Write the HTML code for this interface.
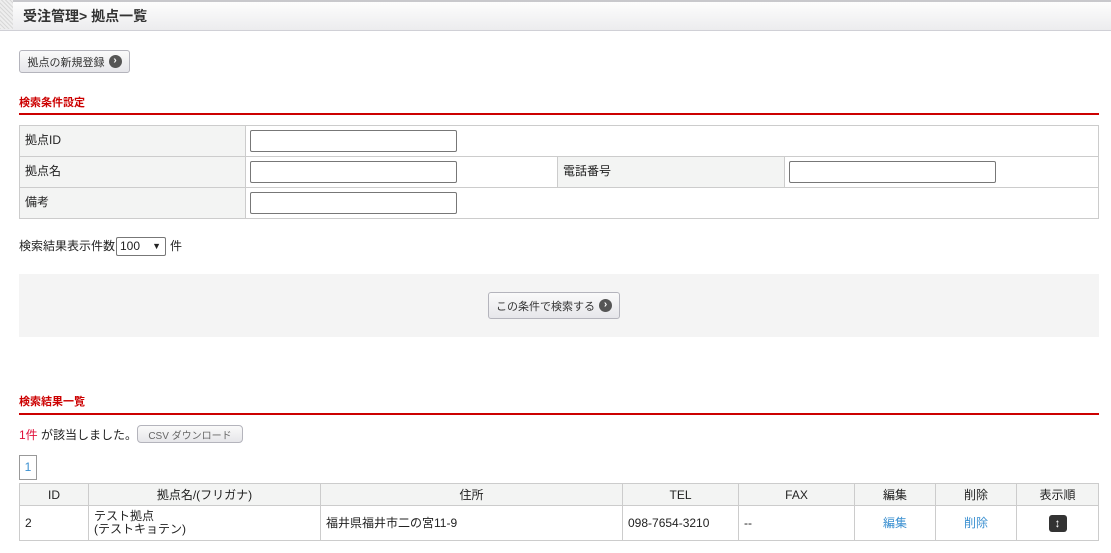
<!DOCTYPE html>
<html><head><meta charset="utf-8"><style>
*{box-sizing:border-box;margin:0;padding:0}
body{width:1111px;height:553px;overflow:hidden;background:#fff;font-family:"Liberation Sans","Noto Sans CJK JP",sans-serif;font-size:12px;color:#222;position:relative}
.a{position:absolute}
.title{left:0;top:0;width:1111px;height:31px;background:linear-gradient(#fdfdfd,#ececee);border-top:2px solid #c8c8cc;border-bottom:1px solid #d0d0d6}
.stripe{left:0;top:0;width:13px;height:29px;background:repeating-linear-gradient(45deg,#d8d8d8 0 1px,#eee 1px 3px)}
.btn{border:1px solid #b4b4bc;border-radius:3px;background:linear-gradient(#fafafa,#e6e6ea);font-size:11px;display:flex;align-items:center;justify-content:center;gap:4px;color:#333}
.ic{width:13px;height:13px;border-radius:50%;background:#555;color:#fff;font-size:10px;line-height:12px;text-align:center;font-weight:bold}
.h{color:#c00;font-weight:bold;font-size:11px}
.line{height:2px;background:#c00;left:19px;width:1080px}
table{border-collapse:collapse;position:absolute}
td,th{border:1px solid #ccc;font-weight:normal}
.lbl{background:#f3f4f3;padding-left:5px;padding-bottom:3px}
.inp{width:207px;height:22px;border:1px solid #777;border-radius:2px;margin-left:4px;display:block}
.rt th{background:#f3f4f3;height:22px}
.rt td{height:35px;padding-left:5px;line-height:13px}
.link{color:#3a8fd0;text-align:center;padding-left:0!important}
</style></head><body>
<div class="a title"></div><div class="a stripe"></div>
<div class="a" style="left:23px;top:6px;font-size:14px;font-weight:bold;color:#333">受注管理&gt; 拠点一覧</div>
<div class="a btn" style="left:19px;top:50px;width:111px;height:23px">拠点の新規登録<span class="ic">›</span></div>
<div class="a h" style="left:19px;top:94px">検索条件設定</div>
<div class="a line" style="top:113px"></div>
<table style="left:19px;top:125px;width:1080px">
<tr style="height:31px"><td class="lbl" style="width:226px">拠点ID</td><td colspan="3"><span class="inp"></span></td></tr>
<tr style="height:31px"><td class="lbl">拠点名</td><td style="width:312px"><span class="inp"></span></td><td class="lbl" style="width:227px">電話番号</td><td><span class="inp"></span></td></tr>
<tr style="height:31px"><td class="lbl">備考</td><td colspan="3"><span class="inp"></span></td></tr>
</table>
<div class="a" style="left:19px;top:237px">検索結果表示件数</div>
<div class="a" style="left:116px;top:237px;width:50px;height:19px;border:1px solid #777;border-radius:2px;padding-left:3px;line-height:17px">100 <span style="position:absolute;right:4px;font-size:9px">▼</span></div>
<div class="a" style="left:170px;top:237px">件</div>
<div class="a" style="left:19px;top:274px;width:1080px;height:63px;background:#f4f4f4"></div>
<div class="a btn" style="left:488px;top:292px;width:132px;height:27px">この条件で検索する<span class="ic">›</span></div>
<div class="a h" style="left:19px;top:393px">検索結果一覧</div>
<div class="a line" style="top:413px"></div>
<div class="a" style="left:19px;top:426px"><span style="color:#e0103a">1件</span> が該当しました。</div>
<div class="a btn" style="left:137px;top:425px;width:106px;height:18px;font-size:10px;color:#666;border-radius:4px">CSV ダウンロード</div>
<div class="a" style="left:19px;top:455px;width:18px;height:25px;border:1px solid #999;color:#3a8fd0;text-align:center;line-height:23px">1</div>
<table class="rt" style="left:19px;top:483px;width:1080px">
<tr><th style="width:69px">ID</th><th style="width:232px">拠点名/(フリガナ)</th><th style="width:302px">住所</th><th style="width:116px">TEL</th><th style="width:116px">FAX</th><th style="width:81px">編集</th><th style="width:81px">削除</th><th>表示順</th></tr>
<tr><td>2</td><td>テスト拠点<br>(テストキョテン)</td><td>福井県福井市二の宮11-9</td><td>098-7654-3210</td><td>--</td><td class="link">編集</td><td class="link">削除</td><td style="text-align:center;padding:0"><span style="display:inline-block;width:18px;height:17px;background:#333;border-radius:3px;color:#fff;font-size:12px;line-height:17px;font-weight:bold">↕</span></td></tr>
</table>
</body></html>
